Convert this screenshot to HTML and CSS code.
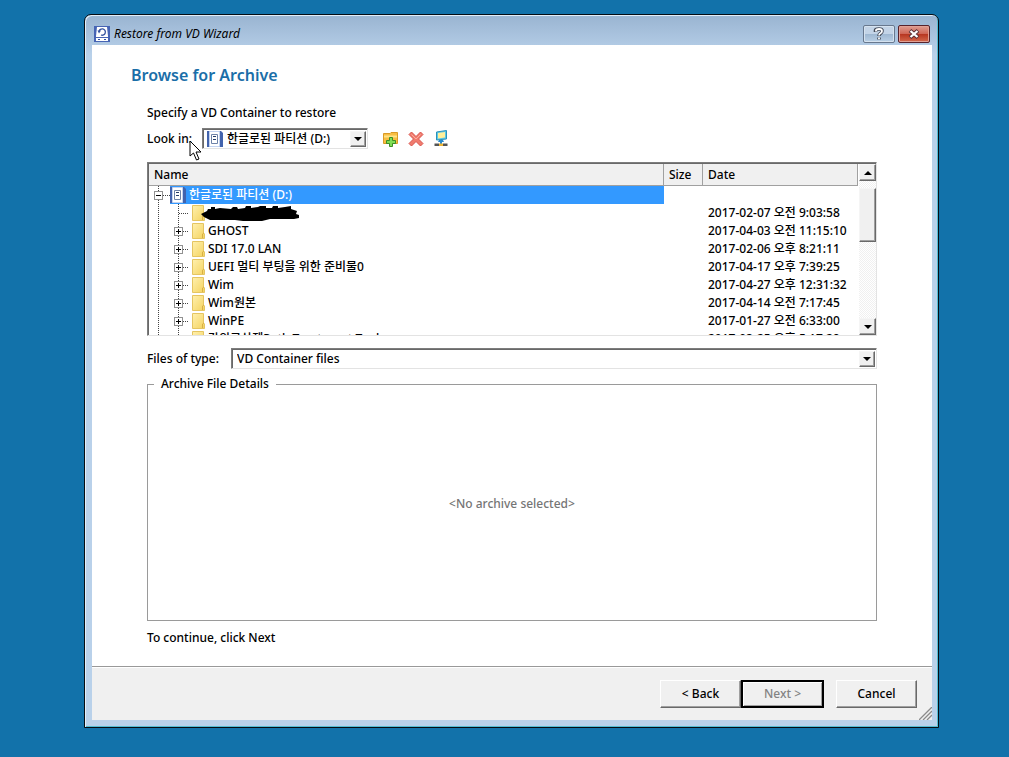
FILE: index.html
```html
<!DOCTYPE html>
<html lang="ko">
<head>
<meta charset="utf-8">
<title>Restore from VD Wizard</title>
<link rel="stylesheet" href="styles.css">
</head>
<body>
<svg class="defs" width="0" height="0" aria-hidden="true">
  <defs>
    <linearGradient id="gold" x1="0" x2="1" y1="0" y2="1"><stop offset="0" stop-color="#fff0ae"/><stop offset="1" stop-color="#f4d35f"/></linearGradient>
    <symbol id="drive" viewBox="0 0 16 16">
      <path d="M0 0H14L16 2V16H0Z" fill="#4263ad"/>
      <path d="M2.500 .5H12.500V15.500H2.500Z" fill="#fff" stroke="#c4d4f1"/>
      <path d="M4.500 3.500H10.500V12.500H4.500Z" fill="#fff" stroke="#6d82a8"/>
      <path d="M6 5.500H9M6 8.500H9" stroke="#263d69"/>
    </symbol>
    <symbol id="folder" viewBox="0 0 13 16">
      <path d="M.5 .5H11.500V10L12.500 11V15.500H.5Z" fill="url(#gold)" stroke="#e5c561"/>
      <path d="M10.500 15V11L12 10" fill="none" stroke="#d8b044"/>
    </symbol>
  </defs>
</svg>
<div class="window">
  <header class="titlebar">
    <svg class="app-icon" viewBox="0 0 16 16" aria-hidden="true">
      <path d="M0 0H16V16H0Z" fill="#4664b4"/>
      <path d="M3 1H13L14 10V15H2V10Z" fill="#fff"/>
      <path d="M2 11.500H14" stroke="#4664b4"/>
      <path d="M5 5.500A3.200 3.200 0 1 1 7 9" fill="none" stroke="#35539f" stroke-width="1.300"/>
      <path d="M3.500 4.500H7L5 7.500Z" fill="#35539f"/>
      <path d="M4 13.500H6M10 13.500H12" stroke="#35539f"/>
    </svg>
    <h1 class="title">Restore from VD Wizard</h1>
    <button class="caption-button" type="button" aria-label="Help">
      <svg width="12" height="14" viewBox="0 0 12 14" fill="none"><path d="M2.500 5V3.500Q2.500 2 6 2T9 4Q9 5.500 7.500 6.300Q6 7 6 9M6 10.500V12.500" stroke="#444b59" stroke-width="3.600"/><path d="M3 4.500V3.500Q3 2 6 2T9 4Q9 5.500 7.500 6.300Q6 7 6 8.500M6 10.500V12.200" stroke="#fff" stroke-width="1.800"/></svg>
    </button>
    <button class="caption-button close" type="button" aria-label="Close">
      <svg width="12" height="10" viewBox="0 0 12 10" fill="none"><path d="M2 1.500L10 8.500M10 1.500L2 8.500" stroke="#583036" stroke-width="4"/><path d="M2.500 2L9.500 8M9.500 2L2.500 8" stroke="#fff" stroke-width="2.300"/></svg>
    </button>
  </header>
  <main class="content">
    <h2 class="heading">Browse for Archive</h2>
    <p class="intro">Specify a VD Container to restore</p>
    <div class="look-row">
      <label class="look-label" for="look">Look in:
        <svg class="pointer" width="15" height="22" viewBox="0 0 15 22" aria-hidden="true"><path d="M1 1V16L4.500 13L7.500 20L10 19L7 12H12Z" fill="#fff" stroke="#000"/></svg>
      </label>
      <div class="combo look-combo">
        <svg class="combo-icon" width="16" height="16"><use href="#drive"/></svg>
        <select id="look"><option>한글로된 파티션 (D:)</option></select>
        <span class="arrow-box"><i class="arrow"></i></span>
      </div>
      <div class="tools">
        <button class="tool" type="button" aria-label="New folder">
          <svg width="17" height="16" viewBox="0 0 17 16"><path d="M1.500 12.500V2.500H8L9 1.500H15.500V12.500Z" fill="#f8bd42" stroke="#d99a25"/><path d="M2 5.500H15" stroke="#ffe384" stroke-width="2"/><path d="M7.500 6.500H10.500V9.500H13.500V12.500H10.500V15.500H7.500V12.500H4.500V9.500H7.500Z" fill="#7fdd55" stroke="#3b8f27"/></svg>
        </button>
        <button class="tool" type="button" aria-label="Delete">
          <svg width="16" height="16" viewBox="0 0 16 16"><path d="M3.500 1L8 5.500L12.500 1L15 3.500L10.500 8L15 12.500L12.500 15L8 10.500L3.500 15L1 12.500L5.500 8L1 3.500Z" fill="#f07c6e" stroke="#d9534c"/><path d="M3.500 3.500L8 8L12.500 3.500" fill="none" stroke="#ffab9c"/></svg>
        </button>
        <button class="tool" type="button" aria-label="Map network drive">
          <svg width="14" height="17" viewBox="0 0 14 17"><path d="M2.500 2L12.500 .5V9L2.500 10Z" fill="#5cc8e8" stroke="#2b92b9"/><path d="M4 3L11 2V7.500L4 8.500Z" fill="#fff09a"/><path d="M5 10H9L10 12H4Z" fill="#278bd0"/><path d="M7 11V14" stroke="#278bd0" stroke-width="2"/><path d="M.5 13.500H5V16H.5ZM9 13.500H13.500V16H9Z" fill="#555"/><path d="M5 13.500H9V16H5Z" fill="#f1b83a"/></svg>
        </button>
      </div>
    </div>
    <section class="browser" aria-label="Folders">
      <div class="list">
        <table class="files">
          <colgroup><col><col class="size-col"><col class="date-col"></colgroup>
          <thead><tr><th scope="col">Name</th><th scope="col">Size</th><th scope="col">Date</th></tr></thead>
          <tbody>
            <tr class="selected"><td><div class="cell root"><i class="box minus"></i><svg class="drive-icon" width="16" height="16"><use href="#drive"/></svg>한글로된 파티션 (D:)</div></td><td></td><td></td></tr>
            <tr><td><div class="cell leaf"><i class="spacer"></i><svg class="folder" width="13" height="16"><use href="#folder"/></svg><svg class="scribble" width="98" height="16" viewBox="0 0 98 16" aria-hidden="true"><path d="M0 9L6 6L7 4L10 4V2H14V4L19 3L30 4L32 2H36L37 4L44 3L45 1H50V3L57 2L59 1H65V3L71 3L72 1H77V3L84 2L90 1V4L96 6L95 9L98 10V13L93 14L80 14L69 14L61 16H42L34 15L23 15L9 15L3 12Z"/></svg></div></td><td></td><td>2017-02-07 오전 9:03:58</td></tr>
            <tr><td><div class="cell"><i class="box"></i><svg class="folder" width="13" height="16"><use href="#folder"/></svg>GHOST</div></td><td></td><td>2017-04-03 오전 11:15:10</td></tr>
            <tr><td><div class="cell"><i class="box"></i><svg class="folder" width="13" height="16"><use href="#folder"/></svg>SDI 17.0 LAN</div></td><td></td><td>2017-02-06 오후 8:21:11</td></tr>
            <tr><td><div class="cell"><i class="box"></i><svg class="folder" width="13" height="16"><use href="#folder"/></svg>UEFI 멀티 부팅을 위한 준비물0</div></td><td></td><td>2017-04-17 오후 7:39:25</td></tr>
            <tr><td><div class="cell"><i class="box"></i><svg class="folder" width="13" height="16"><use href="#folder"/></svg>Wim</div></td><td></td><td>2017-04-27 오후 12:31:32</td></tr>
            <tr><td><div class="cell"><i class="box"></i><svg class="folder" width="13" height="16"><use href="#folder"/></svg>Wim원본</div></td><td></td><td>2017-04-14 오전 7:17:45</td></tr>
            <tr><td><div class="cell"><i class="box"></i><svg class="folder" width="13" height="16"><use href="#folder"/></svg>WinPE</div></td><td></td><td>2017-01-27 오전 6:33:00</td></tr>
            <tr><td><div class="cell"><i class="box"></i><svg class="folder" width="13" height="16"><use href="#folder"/></svg>강의로삭제Path Treatment Tool</div></td><td></td><td>2017-03-25 오후 5:17:29</td></tr>
          </tbody>
        </table>
      </div>
      <div class="scrollbar">
        <button class="arrow-box" type="button" aria-label="Scroll up"><i class="arrow up"></i></button>
        <div class="thumb"></div>
        <button class="arrow-box down" type="button" aria-label="Scroll down"><i class="arrow"></i></button>
      </div>
    </section>
    <div class="type-row">
      <label for="type">Files of type:</label>
      <div class="combo type-combo">
        <select id="type"><option>VD Container files</option></select>
        <span class="arrow-box"><i class="arrow"></i></span>
      </div>
    </div>
    <fieldset class="details">
      <legend>Archive File Details</legend>
      <p class="empty">&lt;No archive selected&gt;</p>
    </fieldset>
    <p class="hint">To continue, click Next</p>
  </main>
  <footer class="footer">
    <button class="button" type="button">&lt; Back</button>
    <button class="button default" type="button" disabled>Next &gt;</button>
    <button class="button cancel" type="button">Cancel</button>
    <svg class="grip" width="13" height="13" viewBox="0 0 13 13" aria-hidden="true"><path d="M0 13L13 0M4 13L13 4M8 13L13 8" stroke="#8b8b8b" stroke-width="1.300"/></svg>
  </footer>
</div>
</body>
</html>
```

FILE: styles.css
```css
* { box-sizing: border-box; }
body {
  margin: 0;
  min-height: 100vh;
  padding: 14px 70px 29px 84px;
  display: flex;
  background: #1272aa;
  color: #000;
  font: 500 12px/20px "Noto Sans", "Noto Sans CJK KR", sans-serif;
}
h1, h2, p { margin: 0; }
button, select { font: inherit; color: inherit; padding: 0; border-radius: 0; }
.defs { position: absolute; }
.window {
  flex: 1;
  min-width: 0;
  display: flex;
  flex-direction: column;
  padding: 0 6px 7px 7px;
  border: 1px solid #050d14;
  border-radius: 7px 7px 0 0;
  background: linear-gradient(#99b4d1, #b9d1ea 40px);
  box-shadow: inset 1px 1px #e4eef8, inset -1px -1px #54bcd2;
}
.titlebar { display: flex; align-items: center; height: 30px; padding: 7px 2px 0; gap: 3px; }
.app-icon { width: 16px; height: 16px; margin-right: 1px; }
.title { flex: 1; font-size: 12px; font-weight: 400; font-style: italic; }
.caption-button {
  display: grid;
  place-items: center;
  width: 32px;
  height: 18px;
  border: 1px solid #68788e;
  border-radius: 2px;
  background: linear-gradient(#c3d4e7 48%, #9eb7d1 50%, #b9d0e6);
  box-shadow: inset 0 0 0 1px #d5e2ef;
}
.close {
  border-color: #57222b;
  background: linear-gradient(#df9d91 0%, #cf6656 48%, #b63420 50%, #d3684c);
  box-shadow: inset 0 0 0 1px #e0a094;
}
.content { flex: 1; display: flex; flex-direction: column; padding: 18px 55px; background: #fff; }
.heading { margin-left: -16px; color: #1a6ea8; font-size: 16px; line-height: 24px; font-weight: 600; }
.intro { margin-top: 16px; }
.look-row { display: flex; align-items: center; margin-top: 5px; }
.look-label { position: relative; width: 55px; }
.pointer { position: absolute; left: 42px; top: 11px; z-index: 1; }
.combo {
  display: flex;
  height: 21px;
  border: 1px solid;
  border-color: #7d7d7d #e3e3e3 #e3e3e3 #7d7d7d;
  box-shadow: inset 1px 1px #696969;
  padding: 2px 1px 1px 2px;
  background: #fff;
}
.combo select { flex: 1; min-width: 0; padding-left: 4px; border: 0; appearance: none; background: none; line-height: 16px; }
.combo .arrow-box { height: 100%; pointer-events: none; }
.look-combo { width: 166px; }
.combo-icon { margin-left: 2px; }
.tools { display: flex; gap: 8px; margin-left: 14px; }
.tool { width: 17px; height: 17px; border: 0; background: none; display: grid; place-items: center; }
.arrow-box {
  display: grid;
  place-items: center;
  width: 16px;
  height: 17px;
  flex: none;
  border: 1px solid;
  border-color: #f5f5f5 #696969 #696969 #f5f5f5;
  box-shadow: inset -1px -1px #a0a0a0;
  background: #f0f0f0;
}
.arrow { border: 4px solid transparent; border-top-color: #000; border-bottom: 0; }
.arrow.up { border-top: 0; border-bottom: 4px solid #000; }
.browser {
  display: flex;
  height: 174px;
  margin-top: 13px;
  border: 1px solid;
  border-color: #7d7d7d #e3e3e3 #e3e3e3 #7d7d7d;
  box-shadow: inset 1px 1px #696969;
  padding: 1px 0 0 1px;
}
.list { flex: 1; overflow: hidden; }
.files { width: 100%; table-layout: fixed; border-collapse: separate; border-spacing: 0; }
.size-col { width: 39px; }
.date-col { width: 155px; }
th {
  height: 22px;
  padding: 0 5px;
  text-align: left;
  font-weight: 500;
  line-height: 20px;
  background: #f0f0f0;
  border-right: 1px solid #a0a0a0;
  border-bottom: 1px solid #a0a0a0;
}
td { height: 18px; padding: 0 5px; line-height: 18px; white-space: nowrap; }
td:first-child { padding: 0; }
.cell {
  --dots: repeating-linear-gradient(#444 0 1px, transparent 1px 2px);
  display: flex;
  align-items: center;
  height: 18px;
  padding-left: 25px;
  background: var(--dots) 9px 0 / 1px 100% no-repeat, var(--dots) 29px 0 / 1px 100% no-repeat,
    repeating-linear-gradient(90deg, #444 0 1px, transparent 1px 2px) 30px 9px / 9px 1px no-repeat;
}
.box {
  flex: none;
  width: 9px;
  height: 9px;
  border: 1px solid #919191;
  background: linear-gradient(#000, #000) center / 5px 1px no-repeat, linear-gradient(#000, #000) center / 1px 5px no-repeat, #fff;
}
.box.minus { background: linear-gradient(#000, #000) center / 5px 1px no-repeat, #fff; }
.spacer { width: 9px; flex: none; }
.folder { flex: none; margin: 0 3px 0 9px; }
.scribble { flex: none; margin-left: -7px; }
.root {
  padding-left: 5px;
  color: #fff;
  background: var(--dots) 9px 0 / 1px 100% no-repeat,
    repeating-linear-gradient(90deg, #444 0 1px, transparent 1px 2px) 14px 9px / 7px 1px no-repeat,
    linear-gradient(#3399ff, #3399ff) 21px 0 / 100% 100% no-repeat;
}
.drive-icon { flex: none; margin: 0 3px 0 7px; }
.scrollbar {
  display: flex;
  flex-direction: column;
  width: 17px;
  margin-left: 1px;
  background: repeating-conic-gradient(#f0f0f0 0 25%, #fff 0 50%) 0 0 / 2px 2px;
}
.thumb {
  height: 54px;
  margin-top: 7px;
  width: 17px;
  border: 1px solid;
  border-color: #f5f5f5 #696969 #696969 #f5f5f5;
  box-shadow: inset -1px -1px #a0a0a0;
  background: #f0f0f0;
}
.scrollbar .arrow-box { width: 17px; }
.down { margin-top: auto; }
.type-row { display: flex; align-items: center; margin-top: 12px; }
.type-row label { width: 84px; }
.type-combo { flex: 1; }
.type-combo select { padding-left: 3px; }
.details {
  flex: 1;
  display: grid;
  place-items: center;
  min-width: 0;
  margin: 5px 0 0;
  padding: 0 0 6px;
  border: 1px solid #9a9a9a;
}
.details legend { margin-left: 6px; padding: 0 7px; }
.empty { color: #757575; }
.hint { margin-top: 7px; }
.footer {
  position: relative;
  display: flex;
  height: 54px;
  padding: 13px 15px 0;
  justify-content: flex-end;
  border-top: 1px solid #999;
  background: #f0f0f0;
  box-shadow: inset 0 1px #fff;
}
.button {
  width: 81px;
  height: 28px;
  border: 1px solid;
  border-color: #fff #696969 #696969 #fff;
  box-shadow: inset -1px -1px #a0a0a0;
  background: #f0f0f0;
}
.default { width: 83px; border: 2px solid #000; color: #838383; box-shadow: inset 1px 1px #fff, inset -1px -1px #a0a0a0; }
.cancel { margin-left: 12px; }
.grip { position: absolute; right: 0; bottom: 0; }
```
